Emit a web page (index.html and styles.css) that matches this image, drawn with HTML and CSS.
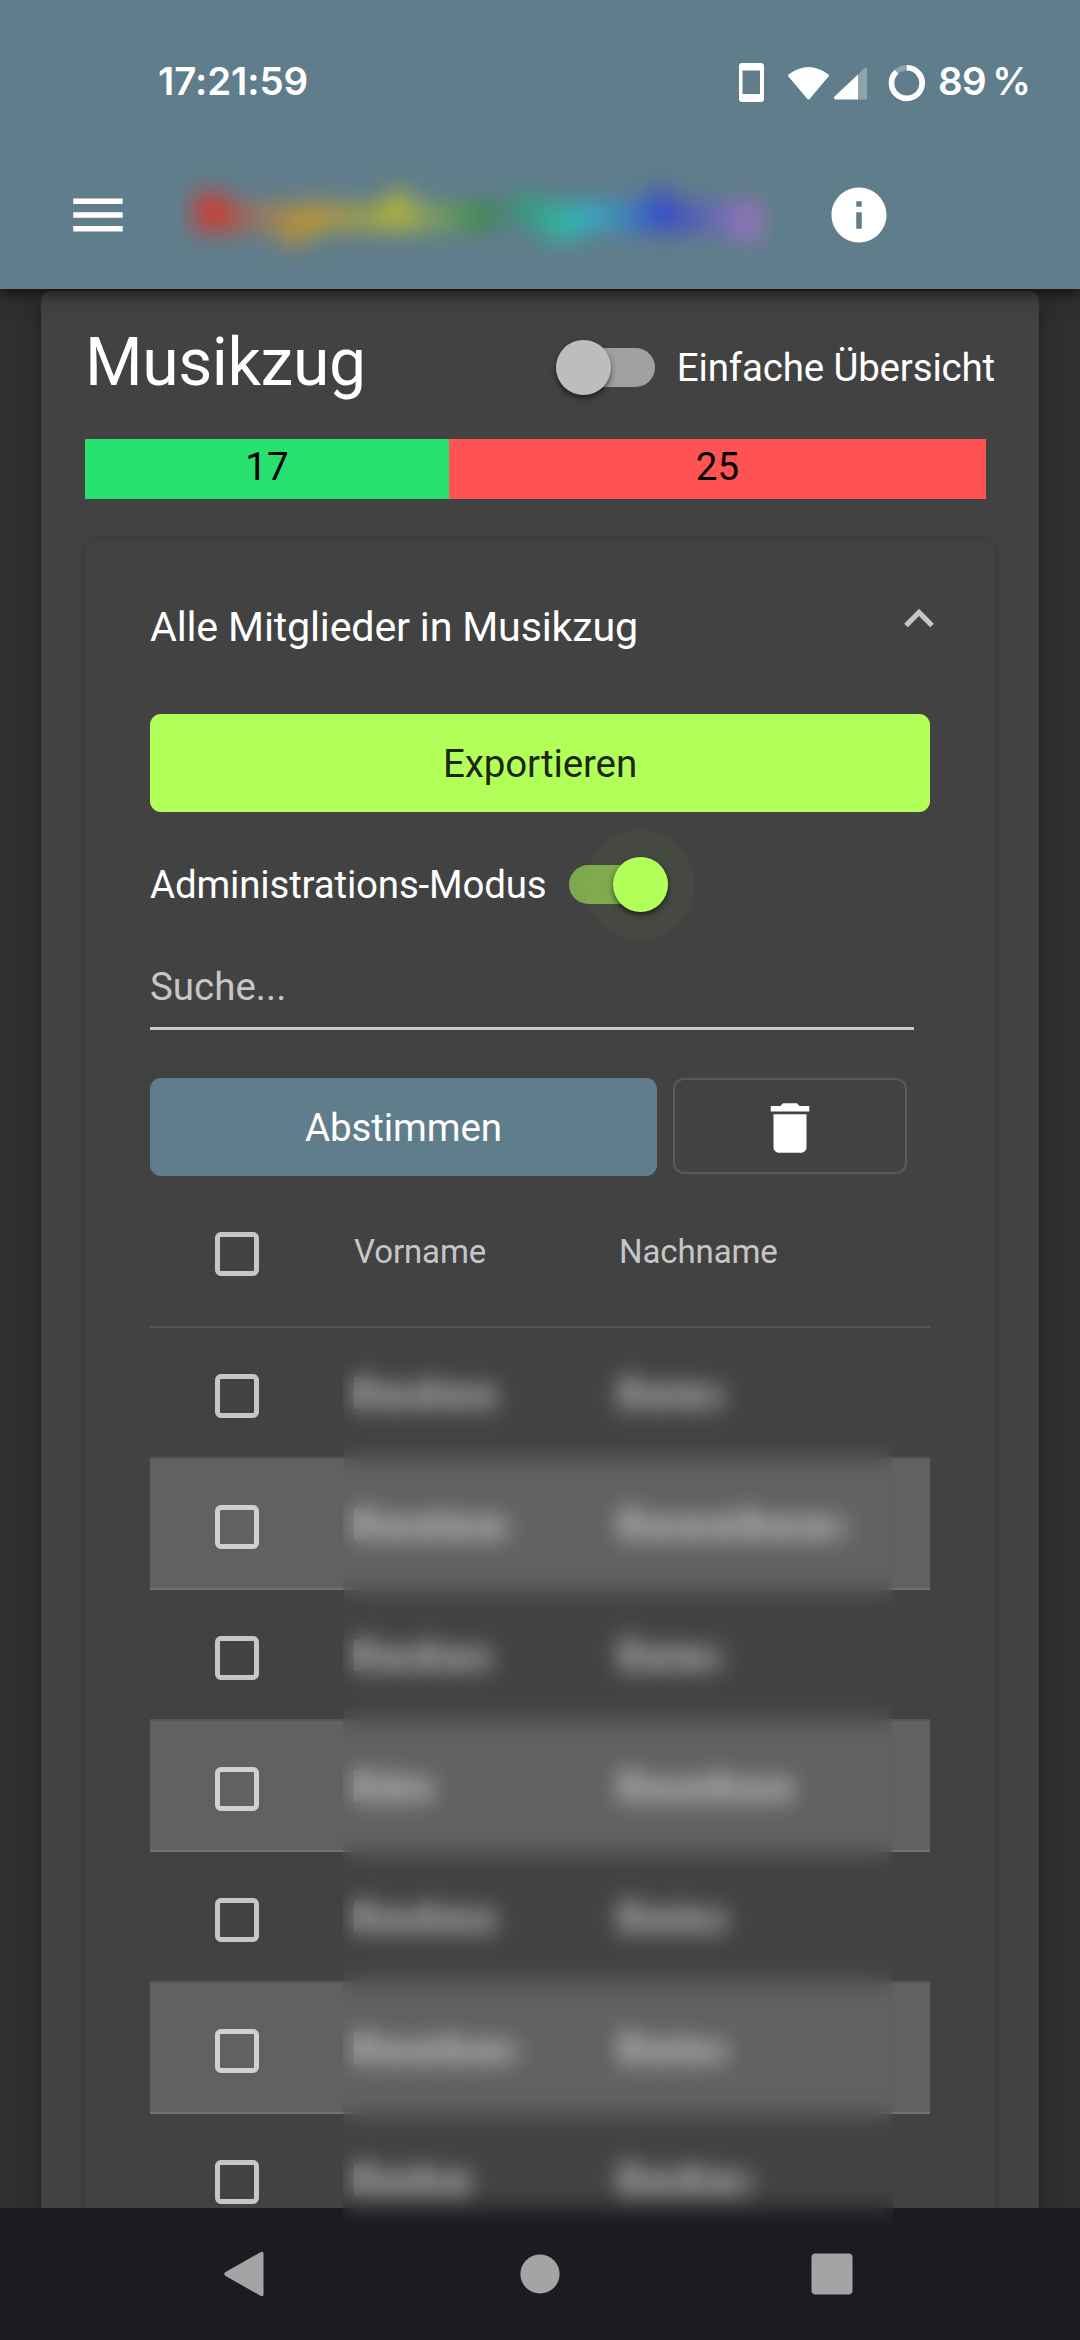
FILE: index.html
```html
<!DOCTYPE html>
<html lang="de">
<head>
<meta charset="utf-8">
<title>Musikzug</title>
<link rel="stylesheet" href="styles.css">
</head>
<body>
<div class="screen">
  <header class="header">
    <div class="status">
      <span class="clock">17:21:59</span>
      <svg class="status-icons" width="190" height="44" viewBox="736 60 190 44">
        <path fill="#fff" fill-rule="evenodd" d="M742 63h19q3 0 3 3v33q0 3-3 3h-19q-3 0-3-3V66q0-3 3-3zM742.5 70.500v23.500h17.500v-23.500z"/>
        <path fill="#fff" d="M788.500 74.500Q808.500 59.500 828.500 74.500L829 76 810 98.500q-1.500 2-3 0L788 76z"/>
        <path fill="#fff" fill-opacity=".3" d="M867 69v29q0 1.500-1.500 1.500H858V74.500l7-7q2-1 2 1.500z"/>
        <path fill="#fff" d="M858 74.500v25h-22.500q-2-.5-1.500-2.500z"/>
        <circle cx="906.800" cy="83" r="15.300" fill="none" stroke="#fff" stroke-opacity=".3" stroke-width="5.600"/>
        <path d="M906.800 67.700A15.300 15.300 0 1 1 896.500 71.700" fill="none" stroke="#fff" stroke-width="5.600"/>
      </svg>
      <span class="battery">89 %</span>
    </div>
    <div class="toolbar">
      <svg class="menu-icon" width="66" height="66" viewBox="0 0 24 24"><path fill="#fff" d="M3 18h18v-2H3v2zm0-5h18v-2H3v2zm0-7v2h18V6H3z"/></svg>
      <div class="brand"><div class="brand-blur"><div class="brand-strip"></div></div></div>
      <svg class="info-icon" width="66" height="66" viewBox="0 0 24 24"><path fill="#fff" d="M12 2C6.480 2 2 6.480 2 12s4.480 10 10 10 10-4.480 10-10S17.520 2 12 2zm1 15h-2v-6h2v6zm0-8h-2V7h2v2z"/></svg>
    </div>
  </header>

  <main class="content">
    <section class="card">
      <div class="card-head">
        <h1 class="title">Musikzug</h1>
        <div class="toggle"><span class="track"></span><span class="thumb"></span></div>
        <span class="label">Einfache Übersicht</span>
      </div>
      <div class="ratio">
        <div class="yes">17</div>
        <div class="no">25</div>
      </div>
      <section class="panel">
        <div class="panel-head">
          <h2 class="panel-title">Alle Mitglieder in Musikzug</h2>
          <svg class="chevron" width="32" height="22" viewBox="0 0 32 22"><path d="M3 18.500 16 5.500 29 18.500" fill="none" stroke="#c6c6c6" stroke-width="5.200"/></svg>
        </div>
        <button class="btn export">Exportieren</button>
        <div class="admin">
          <span class="label">Administrations-Modus</span>
          <div class="toggle on"><span class="track"></span><span class="ripple"></span><span class="thumb"></span></div>
        </div>
        <div class="search">Suche...</div>
        <div class="actions">
          <button class="btn vote">Abstimmen</button>
          <button class="btn trash"><svg width="66" height="66" viewBox="0 0 24 24"><path fill="#fff" d="M6 19c0 1.100.9 2 2 2h8c1.100 0 2-.9 2-2V7H6v12zM19 4h-3.500l-1-1h-5l-1 1H5v2h14V4z"/></svg></button>
        </div>
        <div class="table">
          <div class="row head"><i class="box"></i><span>Vorname</span><span>Nachname</span></div>
          <div class="row"><i class="box"></i><span class="name" style="width:141px"></span><span class="name" style="width:103px"></span></div>
          <div class="row"><i class="box"></i><span class="name" style="width:156px"></span><span class="name" style="width:225px"></span></div>
          <div class="row"><i class="box"></i><span class="name" style="width:136px"></span><span class="name" style="width:101px"></span></div>
          <div class="row"><i class="box"></i><span class="name" style="width:78px"></span><span class="name" style="width:173px"></span></div>
          <div class="row"><i class="box"></i><span class="name" style="width:140px"></span><span class="name" style="width:106px"></span></div>
          <div class="row"><i class="box"></i><span class="name" style="width:162px"></span><span class="name" style="width:106px"></span></div>
          <div class="row"><i class="box"></i><span class="name" style="width:118px"></span><span class="name" style="width:131px"></span></div>
        </div>
      </section>
    </section>
  </main>

  <nav class="navbar">
    <svg width="44" height="50" viewBox="0 0 44 50"><path fill="#a4a4a6" d="M3.500 23 39 3q2.500-1 2.500 1.500v41q0 2.500-2.500 1.500L3.500 27q-2.500-2 0-4z"/></svg>
    <svg width="44" height="50" viewBox="0 0 44 50"><circle cx="24" cy="25" r="19.600" fill="#a4a4a6"/></svg>
    <svg width="44" height="50" viewBox="0 0 44 50"><rect x="1.500" y="4.500" width="41" height="41" rx="4" fill="#a4a4a6"/></svg>
  </nav>
  <div class="privacy-blur"></div>
</div>
</body>
</html>
```

FILE: styles.css
```css
* { box-sizing: border-box; }
body { margin: 0; background: #303030; font-family: Roboto, sans-serif; font-size: 38.5px; line-height: 55px; color: #fff; }
h1, h2 { margin: 0; font-weight: 400; }
svg { display: block; flex: none; }

.screen { position: relative; width: 1080px; height: 2340px; overflow: hidden; display: flex; flex-direction: column; }

.header { position: relative; z-index: 2; flex: none; height: 289px; background: #607d8b; box-shadow: 0 5px 11px rgba(0,0,0,.45), 0 3px 26px rgba(0,0,0,.25); }
.status { display: flex; align-items: center; height: 142px; padding: 21px 50px 0 158px; font-family: Inter, sans-serif; font-weight: 600; font-size: 38.5px; }
.clock { width: 578px; flex: none; letter-spacing: -.1px; white-space: nowrap; }
.status-icons { margin-right: 12px; }
.battery { white-space: nowrap; letter-spacing: -.6px; word-spacing: -3px; }
.toolbar { display: flex; align-items: center; height: 146px; padding: 0 0 0 65px; }
.brand { width: 592px; height: 110px; margin: 0 53px 0 50px; overflow: hidden; display: flex; align-items: center; padding: 2px 12px 0 14px; }
.brand-blur { flex: 1; filter: blur(11px); }
.brand-strip { height: 60px;
  clip-path: polygon(0 12%, 6% 12%, 6% 30%, 34% 28%, 34% 8%, 38% 8%, 38% 28%, 54% 28%, 54% 10%, 61% 14%, 61% 30%, 80% 26%, 80% 6%, 84% 6%, 84% 28%, 100% 26%, 100% 90%, 95% 94%, 94% 76%, 69% 76%, 67% 92%, 62% 92%, 61% 76%, 56% 64%, 52% 64%, 51% 76%, 22% 76%, 19% 98%, 14% 96%, 14% 76%, 0 76%);
  background: linear-gradient(90deg, #d03a34 0, #c04438 5%, #b0785099 11%, #b89638 20%, #b0a83caa 29%, #b0b43c 36%, #90b05099 42%, #5c9a4ccc 47%, #358a48 51%, #4f847899 55%, #369a7c 58%, #34b4a4 65%, #34aec0 69%, #3490ccbb 75%, #3648c8 83%, #6260c0bb 91%, #9a74bc 98%); }

.content { flex: 1; min-height: 0; overflow: hidden; padding: 2px 41px 0; }
.card { height: 2100px; padding: 0 44px; border-radius: 11px; background: #424242; box-shadow: 0 8px 11px rgba(0,0,0,.14), 0 3px 38px rgba(0,0,0,.22); }
.card-head { display: flex; align-items: center; height: 148px; }
.title { flex: 1; font-size: 66px; line-height: 80px; padding-bottom: 4px; letter-spacing: -.4px; }
.label { white-space: nowrap; letter-spacing: -.18px; }

.toggle { position: relative; width: 99px; height: 55px; display: flex; align-items: center; }
.card-head .toggle { margin-right: 22px; margin-top: 5px; }
.card-head .label { margin-top: 5px; }
.track { width: 99px; height: 38.5px; border-radius: 20px; background: #a0a0a0; }
.thumb { position: absolute; left: 0; top: 0; width: 55px; height: 55px; border-radius: 50%; background: #bdbdbd; box-shadow: 0 3px 4px rgba(0,0,0,.4), 0 3px 8px rgba(0,0,0,.2); }
.on .track { background: rgba(178,255,89,.54); }
.on .thumb { left: 44px; background: #b2ff59; }
.ripple { position: absolute; left: 16.5px; top: -27.5px; width: 110px; height: 110px; border-radius: 50%; background: rgba(178,255,89,.04); }

.ratio { display: flex; width: 901px; height: 60px; color: #000; text-align: center; }
.yes { width: 364px; background: #28e070; }
.no { flex: 1; background: #ff5252; }

.panel { height: 1800px; margin-top: 41px; padding: 0 65px; border-radius: 11px; box-shadow: 0 0 3px rgba(0,0,0,.1), 0 3px 14px rgba(0,0,0,.12); }
.panel-head { display: flex; justify-content: space-between; align-items: center; height: 174px; }
.panel-title { font-size: 41.25px; letter-spacing: -.2px; }
.chevron { margin: 0 -5px 18px 0; }
.btn { display: flex; align-items: center; justify-content: center; padding: 0; border: 0; border-radius: 11px; font: inherit; letter-spacing: -.1px; color: #fff; }
.export { width: 780px; height: 98px; background: #b2ff59; color: rgba(0,0,0,.87); }
.admin { display: flex; align-items: center; gap: 22px; height: 145px; }
.search { width: 764px; height: 73px; padding-top: 2px; border-bottom: 3px solid #c8c8c8; color: #c6c6c6; }
.actions { display: flex; gap: 16px; margin-top: 48px; height: 98px; }
.vote { width: 507px; background: #607d8b; }
.trash { width: 234px; height: 96px; padding-top: 3px; background: none; border: 2px solid #5a5a5a; }

.table { width: 780px; }
.row { display: grid; grid-template-columns: 204px 265px 1fr; align-items: center; height: 131px; border-bottom: 2px solid #565656; }
.head { height: 152px; font-size: 33px; letter-spacing: -.1px; color: #c6c6c6; }
.head .box { margin-top: 6px; }
.row:nth-child(odd):not(.head) { background: #616161; border-color: #717171; }
.box { width: 44px; height: 44px; margin: 6px 0 0 65px; border: 5.5px solid rgba(255,255,255,.7); border-radius: 6px; }
.name { height: 32px; margin-top: 1px; clip-path: polygon(0 0, 24px 0, 24px 25%, 50% 25%, 50% 5%, 62% 5%, 62% 25%, 100% 25%, 100% 100%, 0 100%); background: repeating-linear-gradient(90deg, rgba(255,255,255,.44) 0 19px, rgba(255,255,255,.2) 19px 31px); }

.navbar { flex: none; height: 132px; display: flex; justify-content: space-between; align-items: center; padding: 0 226px 0 222px; background: #1c1b20; }
.privacy-blur { position: absolute; z-index: 3; left: 343px; top: 1345px; width: 550px; height: 905px; backdrop-filter: blur(11px); }
```
